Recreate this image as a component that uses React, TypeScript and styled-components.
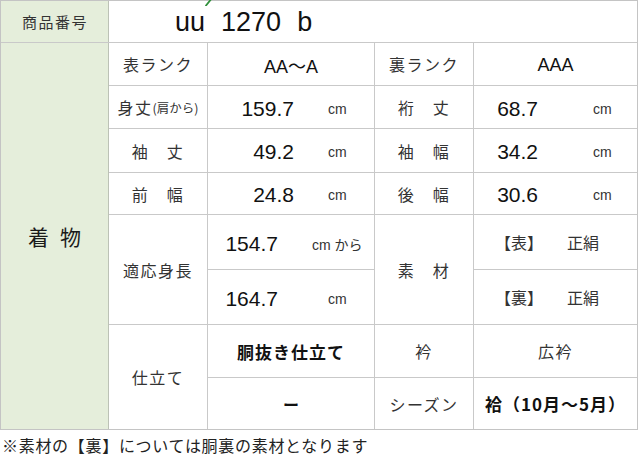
import styled, { createGlobalStyle } from 'styled-components'

const jp = `"Noto Sans CJK JP", "Noto Sans", sans-serif`
const latin = `"Liberation Sans", "Noto Sans CJK JP", sans-serif`

const GlobalStyle = createGlobalStyle`
    html, body {
        margin: 0;
        padding: 0;
        background: #fff;
    }
    body {
        font-family: ${ jp };
        color: #222;
    }
`

interface Measure {
    label: string
    value: string
    unit: string
}

const leftMeasures: Measure[] = [
    { label: '袖　丈', value: '49.2', unit: 'cm' },
    { label: '前　幅', value: '24.8', unit: 'cm' },
]

const rightMeasures: Measure[] = [
    { label: '袖　幅', value: '34.2', unit: 'cm' },
    { label: '後　幅', value: '30.6', unit: 'cm' },
]

export default function App() {
    return (
        <Page>
            <GlobalStyle />
            <Tick viewBox="0 0 8 6" width="8" height="6">
                <path d="M2 5.5 L6.5 0" stroke="#2f8f3a" strokeWidth="1.8" strokeLinecap="round" />
            </Tick>
            <Table>
                <Heading $size={ 15 }>商品番号</Heading>
                <ProductNo>
                    <span>uu</span><span>1270</span><span>b</span>
                </ProductNo>

                <Heading $size={ 21 } $rows={ 8 }>着物</Heading>

                <Label>表ランク</Label>
                <Rank>AA～A</Rank>
                <Label>裏ランク</Label>
                <Rank>AAA</Rank>

                <Label>身丈<Small>(肩から)</Small></Label>
                <Value $numEnd={ 86 } $unitGap={ 34 }>
                    <Num>159.7</Num><Unit>cm</Unit>
                </Value>
                <Label>裄　丈</Label>
                <Value $numEnd={ 64 } $unitGap={ 55 }>
                    <Num>68.7</Num><Unit>cm</Unit>
                </Value>

                { leftMeasures.map(( m, i ) => (
                    <Row key={ m.label } left={ m } right={ rightMeasures[ i ] } />
                )) }

                <Label $rows={ 2 }>適応身長</Label>
                <Value $numEnd={ 70 } $unitGap={ 34 }>
                    <Num>154.7</Num><Unit>cm から</Unit>
                </Value>
                <Label $rows={ 2 }>素　材</Label>
                <Material>
                    <span>【表】</span><span>正絹</span>
                </Material>
                <Value $numEnd={ 70 } $unitGap={ 50 }>
                    <Num>164.7</Num><Unit>cm</Unit>
                </Value>
                <Material>
                    <span>【裏】</span><span>正絹</span>
                </Material>

                <Label $rows={ 2 }>仕立て</Label>
                <Strong $size={ 17 }>胴抜き仕立て</Strong>
                <Label>衿</Label>
                <Label>広衿</Label>
                <Strong $size={ 16 }>ー</Strong>
                <Label>シーズン</Label>
                <Strong $size={ 17 }>袷（10月～5月）</Strong>
            </Table>
            <Note>※素材の【裏】については胴裏の素材となります</Note>
        </Page>
    )
}

function Row({ left, right }: { left: Measure, right: Measure }) {
    return (
        <>
            <Label>{ left.label }</Label>
            <Value $numEnd={ 86 } $unitGap={ 34 }>
                <Num>{ left.value }</Num><Unit>{ left.unit }</Unit>
            </Value>
            <Label>{ right.label }</Label>
            <Value $numEnd={ 64 } $unitGap={ 55 }>
                <Num>{ right.value }</Num><Unit>{ right.unit }</Unit>
            </Value>
        </>
    )
}

const Page = styled.div`
    position: relative;
    width: 640px;
    height: 460px;
    overflow: hidden;
`

const Tick = styled.svg`
    position: absolute;
    left: 204px;
    top: 0;
`

const Table = styled.div`
    display: grid;
    grid-template-columns: 107px 98px 166px 98px 163px;
    grid-template-rows: 41px 42px 42px 43px 41px 54px 54px 52px 51px;
    gap: 1px;
    width: fit-content;
    background: #c9c9c9;
    border: 1px solid #c4c4c4;
`

const Cell = styled.div<{ $rows?: number }>`
    display: flex;
    align-items: center;
    justify-content: center;
    background: #fff;
    grid-row: span ${ p => p.$rows ?? 1 };
    white-space: pre;
`

const Heading = styled(Cell)<{ $size: number }>`
    background: #e5eedb;
    font-size: ${ p => p.$size }px;
    letter-spacing: ${ p => p.$size > 18 ? 11 : 1.5 }px;
    color: ${ p => p.$size > 18 ? '#1a1a1a' : '#333' };
    padding-left: ${ p => p.$size > 18 ? 11 : 1 }px;
    box-shadow: 1px 0 0 #bcc2b6;
`

const ProductNo = styled(Cell)`
    grid-column: span 4;
    justify-content: flex-start;
    gap: 16px;
    padding-left: 66px;
    padding-top: 2px;
    font-family: ${ latin };
    font-size: 27px;
    color: #111;
`

const Label = styled(Cell)`
    font-size: 16px;
    letter-spacing: 1.5px;
    color: #333;
`

const Small = styled.span`
    font-size: 12.5px;
    letter-spacing: 0;
`

const Rank = styled(Cell)`
    font-family: ${ latin };
    font-size: 18px;
    color: #111;
    padding-top: 2px;
`

const Value = styled(Cell)<{ $numEnd: number, $unitGap: number }>`
    display: grid;
    grid-template-columns: ${ p => p.$numEnd }px auto;
    justify-content: start;
    column-gap: ${ p => p.$unitGap }px;
    padding-top: 3px;
`

const Num = styled.span`
    text-align: right;
    font-family: ${ latin };
    font-size: 21px;
    color: #111;
`

const Unit = styled.span`
    font-family: ${ latin };
    font-size: 14px;
    color: #333;
`

const Material = styled(Cell)`
    justify-content: flex-start;
    gap: 24px;
    padding-left: 21px;
    font-size: 16px;
    color: #333;
`

const Strong = styled(Cell)<{ $size: number }>`
    font-size: ${ p => p.$size }px;
    font-weight: bold;
    letter-spacing: ${ p => p.$size > 16 ? 1 : 0 }px;
    color: #111;
`

const Note = styled.p`
    margin: 0;
    padding: 3px 0 0 2px;
    font-size: 16px;
    line-height: 24px;
    letter-spacing: 0.7px;
    color: #222;
`
